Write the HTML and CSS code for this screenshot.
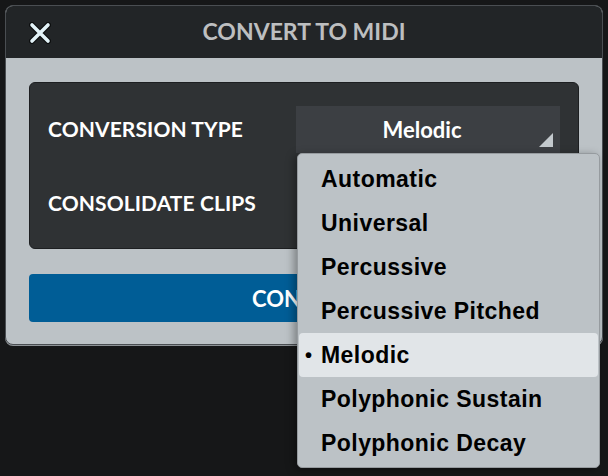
FILE: index.html
```html
<!DOCTYPE html>
<html>
<head>
<meta charset="utf-8">
<link rel="stylesheet" href="styles.css">
</head>
<body>
<div class="stage">
  <div class="dialog">
    <div class="titlebar">
      <div class="close">
        <svg width="22" height="22" viewBox="0 0 22 22">
          <path d="M3 3L19 19M19 3L3 19" stroke="#0c0e0f" stroke-width="6" stroke-linecap="round"/>
          <path d="M3 3L19 19M19 3L3 19" stroke="#e3f3f8" stroke-width="3.6" stroke-linecap="round"/>
        </svg>
      </div>
      <div class="title">CONVERT TO MIDI</div>
      <div></div>
    </div>
    <div class="body">
      <div class="panel">
        <div class="row">
          <div class="label">CONVERSION TYPE</div>
          <div class="select">
            <span>Melodic</span>
            <span class="tri"></span>
          </div>
        </div>
        <div class="row">
          <div class="label">CONSOLIDATE CLIPS</div>
        </div>
      </div>
      <div class="button">CONVERT</div>
    </div>
  </div>
  <div class="menu">
    <div class="item">Automatic</div>
    <div class="item">Universal</div>
    <div class="item">Percussive</div>
    <div class="item">Percussive Pitched</div>
    <div class="item selected"><span class="bullet">•</span>Melodic</div>
    <div class="item">Polyphonic Sustain</div>
    <div class="item">Polyphonic Decay</div>
  </div>
</div>
</body>
</html>
```
FILE: styles.css
```css
html, body {
  margin: 0;
  padding: 0;
  background: #161718;
}
.stage {
  position: relative;
  width: 608px;
  height: 476px;
  padding: 5px 0 0 5px;
  box-sizing: border-box;
  font-family: "Lato", "Open Sans", sans-serif;
}
.dialog {
  width: 598px;
  border-radius: 8px;
  overflow: hidden;
  border: 1px solid #4a4e52;
  box-sizing: border-box;
  background: #bcc2c6;
  box-shadow: 0 1px 0 #8d9296;
}
.titlebar {
  height: 52px;
  background: #222527;
  display: grid;
  grid-template-columns: 1fr auto 1fr;
  align-items: center;
}
.close {
  padding-left: 23px;
  display: flex;
  align-items: center;
  padding-top: 2px;
}
.title {
  color: #bdbfc0;
  font-weight: 700;
  font-size: 23px;
  letter-spacing: 0px;
  padding-bottom: 2px;
}
.body {
  padding: 24px 23px 22px 23px;
}
.panel {
  background: #2f3234;
  border: 1px solid #1d1f21;
  border-radius: 6px;
  padding: 23px 18px 21px 18px;
  display: flex;
  flex-direction: column;
  gap: 27px;
}
.row {
  height: 47px;
  display: flex;
  align-items: center;
  justify-content: space-between;
}
.label {
  color: #ffffff;
  font-weight: 700;
  font-size: 21px;
  letter-spacing: 0.1px;
  padding-bottom: 2px;
}
.select {
  position: relative;
  width: 264px;
  height: 47px;
  box-sizing: border-box;
  padding-right: 12px;
  background: #3c3f43;
  color: #ffffff;
  font-weight: 700;
  font-size: 22px;
  display: flex;
  align-items: center;
  justify-content: center;
}
.tri {
  position: absolute;
  right: 7px;
  bottom: 6px;
  width: 0;
  height: 0;
  border-left: 14px solid transparent;
  border-bottom: 14px solid #c3c9cd;
}
.button {
  margin-top: 25px;
  height: 48px;
  border-radius: 4px;
  background: #005d96;
  color: #ffffff;
  font-weight: 700;
  font-size: 22px;
  display: flex;
  align-items: center;
  justify-content: center;
}
.menu {
  position: absolute;
  left: 297px;
  top: 153px;
  width: 303px;
  height: 315px;
  box-sizing: border-box;
  background: #bcc2c6;
  border: 1px solid #969b9f;
  border-radius: 5px;
  padding: 3px 1px;
  box-shadow: -3px 2px 8px rgba(0,0,0,0.35);
  font-family: "Liberation Sans", Arial, sans-serif;
}
.item {
  height: 44px;
  display: flex;
  align-items: center;
  padding-left: 22px;
  font-weight: 700;
  font-size: 23px;
  letter-spacing: 0.45px;
  color: #000000;
  border-radius: 4px;
  position: relative;
}
.item.selected {
  background: #e1e5e8;
}
.bullet {
  position: absolute;
  left: 6px;
  font-size: 20px;
}
```
